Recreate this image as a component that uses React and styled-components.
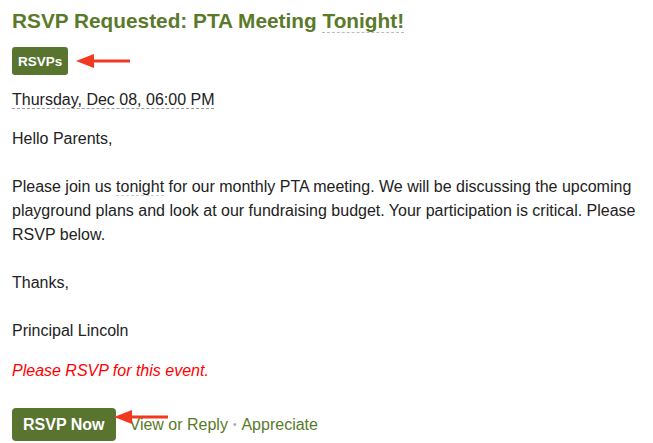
import React from "react";
import styled, { createGlobalStyle } from "styled-components";

const Global = createGlobalStyle`
  body { margin: 0; background: #fff; font-family: "Liberation Sans", Arial, sans-serif; }
`;

const GREEN = "#5a7a2a";
const RED = "#f0391e";

const Page = styled.div`
  padding: 8px 12px 0 12px;
  color: #222;
  font-size: 16px;
`;

const Title = styled.h1`
  margin: 0;
  font-size: 20.8px;
  line-height: 26px;
  font-weight: bold;
  color: ${GREEN};
`;

const Dashed = styled.span`
  border-bottom: 1px dashed ${(p) => p.$c || "#aaa"};
`;

const BadgeRow = styled.div`
  display: flex;
  align-items: center;
  gap: 8px;
  margin-top: 13px;
`;

const Badge = styled.span`
  display: inline-flex;
  align-items: center;
  justify-content: center;
  height: 28px;
  padding: 0 6px;
  background: #58742f;
  color: #fff;
  font-weight: bold;
  font-size: 13.5px;
  border-radius: 3px;
`;

const DateLine = styled.div`
  margin-top: 15px;
  line-height: 20px;
`;

const Body = styled.div`
  margin-top: 17px;
  line-height: 24px;
`;

const Para = styled.p`
  margin: 0 0 24px 0;
`;

const Warning = styled.p`
  margin: 0;
  margin-top: -8px;
  color: #f00;
  font-style: italic;
`;

const Actions = styled.div`
  display: flex;
  align-items: center;
  margin-top: 25px;
  font-size: 16px;
`;

const ButtonWrap = styled.div`
  position: relative;
  margin-right: 14px;
`;

const Button = styled.button`
  display: block;
  height: 33px;
  padding: 0 11px;
  background: #58742f;
  color: #fff;
  border: none;
  border-radius: 4px;
  font: bold 16px "Liberation Sans", Arial, sans-serif;
`;

const ArrowOverlay = styled.svg`
  position: absolute;
  left: 102px;
  top: 1px;
`;

const Link = styled.a`
  color: ${GREEN};
  text-decoration: none;
`;

const Dot = styled.span`
  color: #aaa;
  font-size: 10px;
  margin: 0 5px;
`;

const ArrowShape = ({ w }) => (
  <>
    <rect x="14" y="6.5" width={w - 14} height="3" fill={RED} />
    <polygon points="0,8 18,1 18,15" fill={RED} />
  </>
);

export default function App() {
  return (
    <>
      <Global />
      <Page>
        <Title>
          RSVP Requested: PTA Meeting <Dashed $c="#bbb">Tonight!</Dashed>
        </Title>
        <BadgeRow>
          <Badge>RSVPs</Badge>
          <svg width="54" height="16" viewBox="0 0 54 16">
            <ArrowShape w={54} />
          </svg>
        </BadgeRow>
        <DateLine>
          <Dashed $c="#999">Thursday, Dec 08, 06:00 PM</Dashed>
        </DateLine>
        <Body>
          <Para>Hello Parents,</Para>
          <Para>
            Please join us <Dashed $c="#ccc">tonight</Dashed> for our monthly PTA meeting. We will be discussing the upcoming
            playground plans and look at our fundraising budget. Your participation is critical. Please RSVP below.
          </Para>
          <Para>Thanks,</Para>
          <Para>Principal Lincoln</Para>
          <Warning>Please RSVP for this event.</Warning>
        </Body>
        <Actions>
          <ButtonWrap>
            <Button>RSVP Now</Button>
            <ArrowOverlay width="54" height="16" viewBox="0 0 54 16">
              <ArrowShape w={54} />
            </ArrowOverlay>
          </ButtonWrap>
          <Link href="#">View or Reply</Link>
          <Dot>•</Dot>
          <Link href="#">Appreciate</Link>
        </Actions>
      </Page>
    </>
  );
}
